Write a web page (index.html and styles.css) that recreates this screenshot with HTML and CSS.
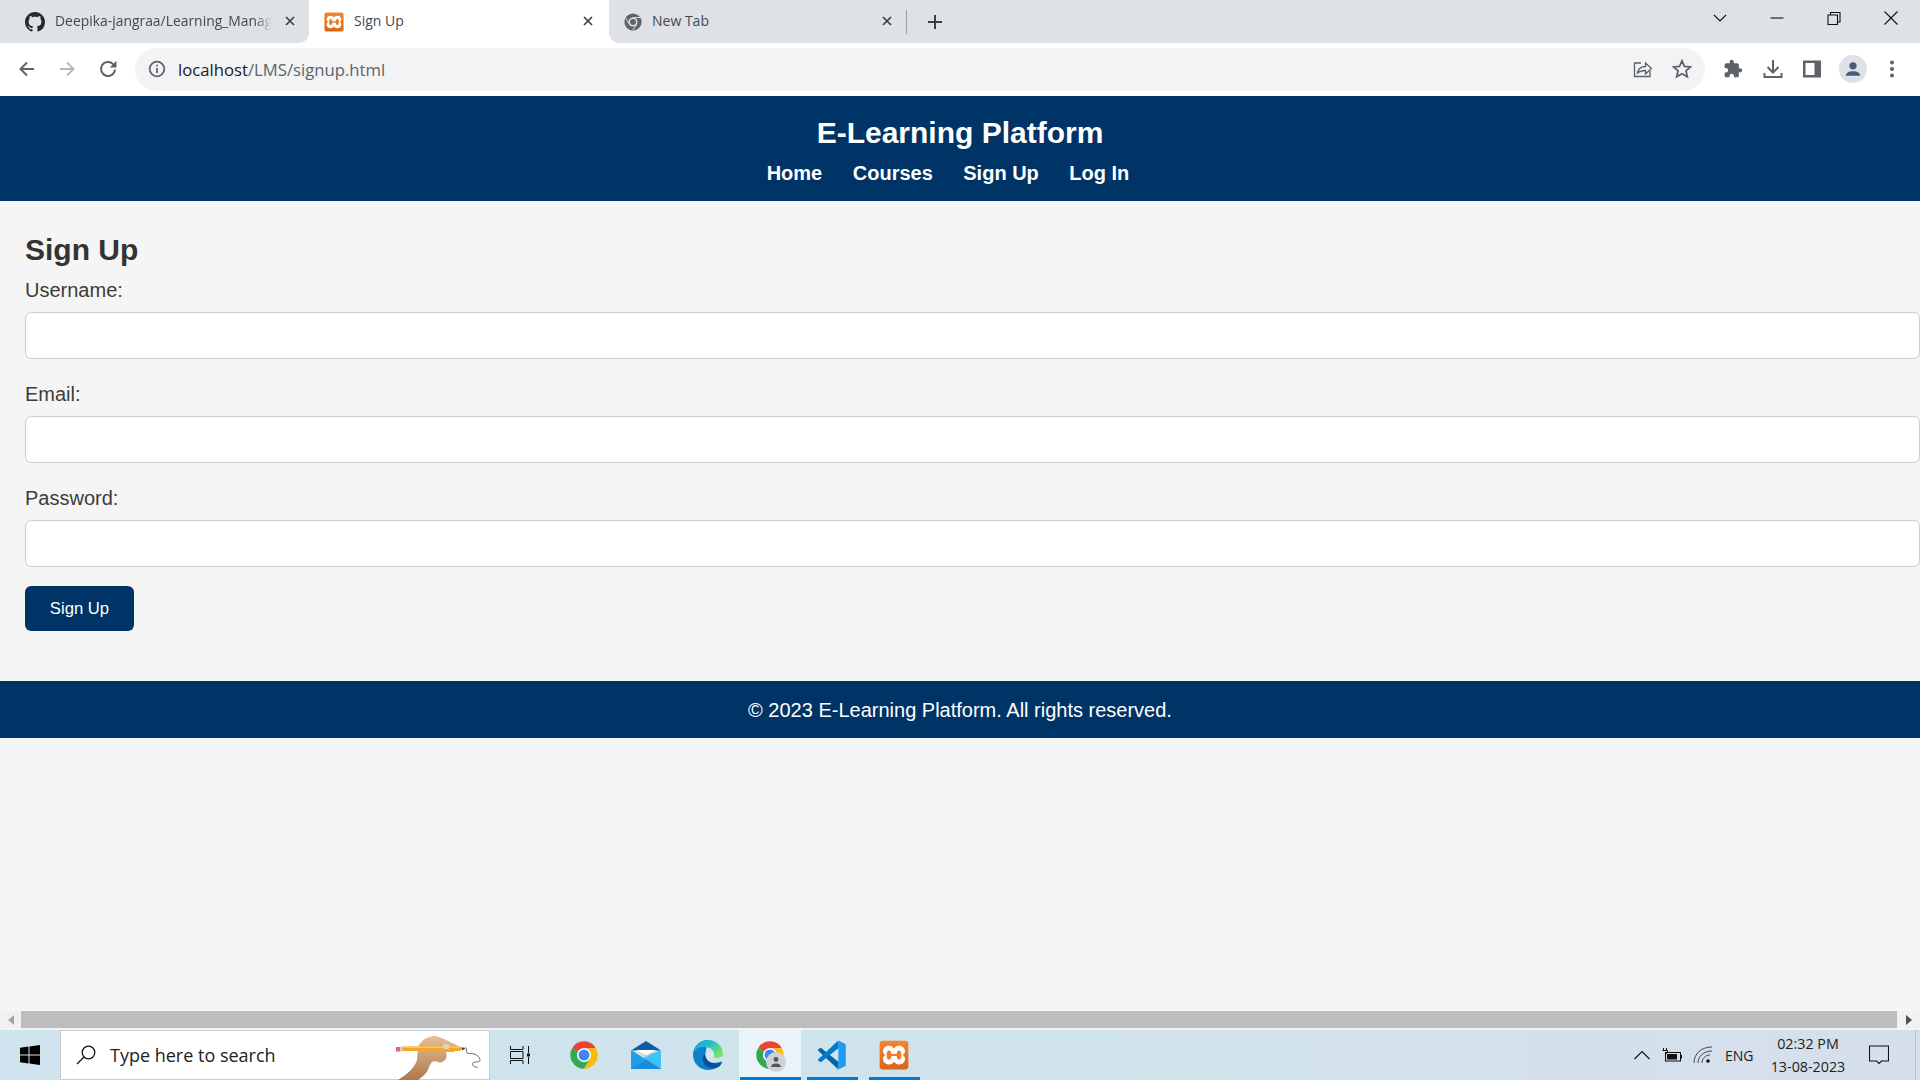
FILE: index.html
```html
<!DOCTYPE html>
<html lang="en">
<head>
<meta charset="utf-8">
<title>Sign Up</title>
<link rel="stylesheet" href="styles.css">
</head>
<body>
<svg class="defs" width="0" height="0" aria-hidden="true">
  <defs>
    <linearGradient id="xg" x1="0" y1="0" x2="0" y2="1"><stop offset="0" stop-color="#f4862f"/><stop offset="1" stop-color="#dc6416"/></linearGradient>
    <symbol id="chrome" viewBox="0 0 48 48">
      <path fill="#ea4335" d="M24 2a22 22 0 0 1 19.05 11H24a11 11 0 0 0-9.53 5.5L4.95 13A22 22 0 0 1 24 2z"/>
      <path fill="#fbbc05" d="M43.05 13A22 22 0 0 1 24 46l9.53-16.5A11 11 0 0 0 24 13z"/>
      <path fill="#34a853" d="M4.95 13A22 22 0 0 0 24 46l9.53-16.5A11 11 0 0 1 14.47 18.5z"/>
      <circle cx="24" cy="24" r="11" fill="#fff"/>
      <circle cx="24" cy="24" r="8.8" fill="#4285f4"/>
    </symbol>
    <symbol id="xampp" viewBox="0 0 24 24">
      <rect x="0.5" y="0.5" width="23" height="23" rx="2.5" fill="url(#xg)"/>
      <path fill="#fff" d="M8 4.500c2 0 3 1 4 2.200 1-1.200 2-2.200 4-2.200 3 0 4.800 2 4.800 4.500 0 1.500-.8 2.300-1.800 3 1 .7 1.800 1.500 1.800 3 0 2.500-1.800 4.500-4.800 4.500-2 0-3-1-4-2.200-1 1.200-2 2.200-4 2.200-3 0-4.800-2-4.800-4.500 0-1.500.8-2.300 1.800-3-1-.7-1.800-1.500-1.800-3 0-2.500 1.800-4.500 4.800-4.500z"/>
      <ellipse cx="8" cy="12" rx="1.900" ry="3.700" fill="#ee7a2c"/>
      <ellipse cx="16" cy="12" rx="1.900" ry="3.700" fill="#ee7a2c"/>
      <rect x="8" y="11.200" width="8" height="1.600" fill="#ee7a2c"/>
    </symbol>
  </defs>
</svg>

<div class="tabstrip">
  <div class="tab tab-first">
    <svg class="ico-18 gh" viewBox="0 0 16 16"><path fill="#24292f" d="M8 0C3.58 0 0 3.58 0 8c0 3.54 2.29 6.53 5.47 7.59.4.07.55-.17.55-.38 0-.19-.01-.82-.01-1.49-2.01.37-2.53-.49-2.69-.94-.09-.23-.48-.94-.82-1.13-.28-.15-.68-.52-.01-.53.63-.01 1.08.58 1.23.82.72 1.21 1.87.87 2.33.66.07-.52.28-.87.51-1.07-1.78-.2-3.64-.89-3.64-3.95 0-.87.31-1.59.82-2.15-.08-.2-.36-1.02.08-2.12 0 0 .67-.21 2.2.82.64-.18 1.32-.27 2-.27.68 0 1.36.09 2 .27 1.53-1.04 2.2-.82 2.2-.82.44 1.1.16 1.92.08 2.12.51.56.82 1.27.82 2.15 0 3.07-1.87 3.75-3.65 3.95.29.25.54.73.54 1.48 0 1.07-.01 1.93-.01 2.2 0 .21.15.46.55.38A8.013 8.013 0 0016 8c0-4.42-3.58-8-8-8z"/></svg>
    <span class="tab-title tab-title-fade">Deepika-jangraa/Learning_Manag</span>
    <svg class="tab-close" viewBox="0 0 12 12"><path d="M2 2l8 8M10 2l-8 8"/></svg>
  </div>
  <div class="tab tab-active">
    <svg class="ico-18 xam"><use href="#xampp"/></svg>
    <span class="tab-title">Sign Up</span>
    <svg class="tab-close" viewBox="0 0 12 12"><path d="M2 2l8 8M10 2l-8 8"/></svg>
  </div>
  <div class="tab tab-rest">
    <div class="tab-third">
      <svg class="ico-18" viewBox="0 0 48 48"><circle cx="24" cy="24" r="23" fill="#5f6368"/><circle cx="24" cy="24" r="12" fill="#dee1e6"/><circle cx="24" cy="24" r="8" fill="#5f6368"/><path stroke="#dee1e6" stroke-width="2.5" d="M24 12h20M14 30L4 12M34 30L23 47"/></svg>
      <span class="tab-title">New Tab</span>
      <svg class="tab-close" viewBox="0 0 12 12"><path d="M2 2l8 8M10 2l-8 8"/></svg>
    </div>
    <span class="tab-sep"></span>
    <svg class="new-tab" viewBox="0 0 16 16"><path d="M8 1v14M1 8h14"/></svg>
    <div class="win-controls">
      <svg class="win-ico" viewBox="0 0 16 16"><path d="M2 5l6 6 6-6"/></svg>
      <svg class="win-ico" viewBox="0 0 16 16"><path d="M1.500 8h13"/></svg>
      <svg class="win-ico" viewBox="0 0 16 16"><path d="M2 5h9.500v9.500H2zM4.500 5V2.500H14V12h-2.500"/></svg>
      <svg class="win-ico" viewBox="0 0 16 16"><path d="M1.500 1.500l13 13M14.500 1.500l-13 13"/></svg>
    </div>
  </div>
</div>

<div class="toolbar">
  <svg class="tb-ico back" viewBox="0 0 20 20"><path d="M17 10H4M10 3.500L3.500 10l6.500 6.500"/></svg>
  <svg class="tb-ico forward" viewBox="0 0 20 20"><path d="M3 10h13M10 3.500l6.500 6.500-6.500 6.500"/></svg>
  <svg class="tb-ico reload" viewBox="0 0 20 20"><path d="M17 10.500a7 7 0 1 1-2-5.400L17 7.500"/><path class="solid" d="M18.500 1.800v6.800h-6.800z"/></svg>
  <div class="omnibox">
    <svg class="info" viewBox="0 0 18 18"><circle cx="9" cy="9" r="7.300"/><path d="M9 8v5"/><circle class="solid" cx="9" cy="5.500" r="1"/></svg>
    <span class="url"><span class="url-host">localhost</span>/LMS/signup.html</span>
    <svg class="tb-ico share" viewBox="0 0 20 20"><path d="M8 4H1.500v13.500H17V12M4.500 14c.8-4 4-6.500 8-6.500V4l6 5.500-6 5.500v-3.500c-3 0-6 .8-8 2.500z"/></svg>
    <svg class="tb-ico star" viewBox="0 0 20 20"><path d="M10 1.800l2.500 5.500 6 .6-4.500 4 1.300 5.900L10 14.800l-5.300 3 1.300-5.900-4.500-4 6-.6z"/></svg>
  </div>
  <svg class="tb-ico solid-ico puzzle" viewBox="0 0 24 24"><path d="M20.500 11H19V7c0-1.100-.9-2-2-2h-4V3.500C13 2.120 11.880 1 10.500 1S8 2.120 8 3.500V5H4c-1.100 0-1.990.9-1.990 2v3.800H3.500c1.490 0 2.700 1.210 2.700 2.700s-1.210 2.700-2.700 2.700H2V20c0 1.100.9 2 2 2h3.800v-1.500c0-1.490 1.210-2.700 2.700-2.700 1.490 0 2.700 1.210 2.700 2.700V22H17c1.100 0 2-.9 2-2v-4h1.500c1.380 0 2.500-1.120 2.500-2.500S21.880 11 20.500 11z"/></svg>
  <svg class="tb-ico download" viewBox="0 0 20 20"><path d="M10 1v12M4.500 8l5.500 5.500L15.500 8M1.500 14v4h17v-4"/></svg>
  <svg class="tb-ico panel" viewBox="0 0 20 20"><path class="solid" fill-rule="evenodd" d="M1 1.500h18v17H1zM3.500 4v12h9V4z"/></svg>
  <div class="avatar"><svg viewBox="0 0 20 20"><circle cx="10" cy="6.500" r="4"/><path d="M2 17.500c0-3.500 4-5 8-5s8 1.500 8 5z"/></svg></div>
  <svg class="tb-ico dots" viewBox="0 0 20 20"><circle cx="10" cy="3.500" r="2"/><circle cx="10" cy="10" r="2"/><circle cx="10" cy="16.500" r="2"/></svg>
</div>

<div class="viewport">
  <header class="site-header">
    <h1 class="site-title">E-Learning Platform</h1>
    <nav class="site-nav">
      <a href="#">Home</a>
      <a href="#">Courses</a>
      <a href="#">Sign Up</a>
      <a href="#">Log In</a>
    </nav>
  </header>
  <main class="content">
    <h2 class="page-title">Sign Up</h2>
    <form>
      <label for="u">Username:</label>
      <input id="u" type="text">
      <label for="e">Email:</label>
      <input id="e" type="email">
      <label for="p">Password:</label>
      <input id="p" type="password">
      <button type="button">Sign Up</button>
    </form>
  </main>
  <footer class="site-footer">© 2023 E-Learning Platform. All rights reserved.</footer>
</div>

<div class="hscroll">
  <span class="arrow arrow-left"></span>
  <span class="thumb"></span>
  <span class="arrow arrow-right"></span>
</div>
<div class="scroll-gap"></div>

<div class="taskbar">
  <div class="start">
    <svg viewBox="0 0 20 20"><path d="M0 2.800l8.500-1.200v7.900H0zM9.500 1.400L20 0v9.500H9.500zM0 10.500h8.500v7.900L0 17.200zM9.500 10.500H20V20L9.500 18.600z"/></svg>
  </div>
  <div class="search">
    <svg class="search-ico" viewBox="0 0 20 20"><circle cx="12.500" cy="7.500" r="6.300"/><path d="M8 12L1 19"/></svg>
    <span>Type here to search</span>
    <svg class="hand" viewBox="0 0 90 50">
      <defs>
        <linearGradient id="skin" x1="0" y1="0" x2="0" y2="1"><stop offset="0" stop-color="#e4c09a"/><stop offset=".6" stop-color="#c4946a"/><stop offset="1" stop-color="#a97850"/></linearGradient>
      </defs>
      <path fill="url(#skin)" d="M2 50C10 45 18 39 21 30 22 24 21 19 23 15 26 10 31 7 37 6c5 0 9 2 13 4 4 2 9 4 12 6l-4 6-8 0c1 3 1 6-1 8-2 2-5 3-7 2-2-1-5-1-6 0-2 2-3 5-4 8-2 4-6 7-10 10z"/>
      <rect x="0" y="17" width="4.500" height="4.500" fill="#d9667a"/>
      <rect x="4.500" y="16.500" width="2" height="5" fill="#cfcfcf"/>
      <path fill="#f0a72a" d="M6.500 16.500H64l3 2-3 2.500H6.500z"/>
      <rect x="6.500" y="16.500" width="57" height="1.500" fill="#f8c65a"/>
      <path fill="#4a3b28" d="M66 17l3.500 1.700-3.500 1.500z"/>
      <ellipse cx="50" cy="16.500" rx="3.500" ry="2.800" fill="#ecd0b0"/>
      <path fill="none" stroke="#6f6f6f" stroke-width="1" d="M69 17c2 1 1 5 2 6s4 0 7 1 6 3 6 6-5 1-7 3 2 5 5 4"/>
    </svg>
  </div>
  <div class="slot slot-view">
    <svg class="taskview" viewBox="0 0 20 18"><path d="M.5 0v3.500h12.500V0M.5 18v-3.500h12.500V18M.5 5.500h12.500v7H.5zM18.500 0v7M18.500 11v7"/><rect class="dot" x="17" y="7.500" width="3" height="3"/></svg>
  </div>
  <div class="slot"><svg class="app"><use href="#chrome"/></svg></div>
  <div class="slot">
    <svg class="app" viewBox="0 0 30 30">
      <path fill="#0c5ca8" d="M0 10.500L15 1l15 9.500z"/>
      <path fill="#1f9fe8" d="M0 10L15 19.500 30 10V29H0z"/>
      <path fill="#3cc4f6" d="M30 10L15 19.500l-3-2z"/>
      <path fill="#3cc4f6" d="M30 10v19L15 19.500z"/>
      <path fill="#1b8cdb" d="M0 29L15 19.500 30 29z"/>
      <path fill="#fff" d="M5 10h20L15 17.300z"/>
      <path fill="#b9c2cc" d="M5 10l10 5.500L25 10l-10 7.300z"/>
    </svg>
  </div>
  <div class="slot">
    <svg class="app" viewBox="0 0 30 30">
      <defs>
        <linearGradient id="eg" x1="0" y1="0" x2="1" y2="0.600"><stop offset="0" stop-color="#1b9de2"/><stop offset=".55" stop-color="#22c2c4"/><stop offset="1" stop-color="#7be36b"/></linearGradient>
      </defs>
      <path fill="#0f7fd0" d="M15 0C6.700 0 0 6.700 0 15s6.700 15 15 15c6 0 12-3 14-8.500-8 3-16 1-17-6z"/>
      <path fill="url(#eg)" d="M15 0C7 0 1 6 0 13c3-5 8-7 13-6 6 1 9 4 8 9-.3 2 3 2.500 6 1.500 2-1 3-2 3-3.500C30 6 23 0 15 0z"/>
      <path fill="#0b4f96" d="M12 14c-2.500 2-3 5-1.500 8.500 2 5 9 7.500 15 4.500 2-1 3-3 3.500-5.500-2 1.500-6 2.500-10 1.500-4-1-6-4-7-9z"/>
      <path fill="#d5e9f2" d="M17 12c-3 .5-4.500 3-3.500 5.500 1 2.500 4 4 7.500 4-2.500-1-4-3-3.500-4.500.3-1 2-1.500 3.500-.5 0-2.500-1.500-4.500-4-4.500z"/>
    </svg>
  </div>
  <div class="slot slot-open slot-active">
    <svg class="app app-shift"><use href="#chrome"/></svg>
    <div class="profile-badge"><svg viewBox="0 0 20 20"><circle cx="10" cy="6.500" r="3.500"/><path d="M3 17c0-3.500 3.500-5 7-5s7 1.500 7 5z"/></svg></div>
  </div>
  <div class="slot slot-open">
    <svg class="app" viewBox="0 0 100 100">
      <path fill="#0065a9" d="M4 36v-5l9-5 59 47-1 25z"/>
      <path fill="#007acc" d="M71 2l1 25-59 47-9-5v-5z"/>
      <path fill="#1f9cf0" d="M71 2l25 12v72L71 98z"/>
    </svg>
  </div>
  <div class="slot slot-open"><svg class="app"><use href="#xampp"/></svg></div>
  <div class="tray">
    <svg class="tray-chev" viewBox="0 0 16 10"><path d="M.5 9L8 1.500 15.500 9"/></svg>
    <svg class="battery" viewBox="0 0 20 14"><path class="bline" d="M1.500 0v2.500M4.500 0v2.500M.5 2.500h5v2L3 6.500"/><rect class="bline" x="3.500" y="4.500" width="15" height="8.500"/><rect x="5" y="6" width="10" height="5.500" fill="#111"/><rect x="19" y="7" width="1" height="3.500" fill="#111"/></svg>
    <svg class="wifi" viewBox="0 0 20 18"><path d="M1 17C1 8 8 1 19 1M5 17c0-6 5-12 14-12M9 17c0-4 3-8 8-8"/><circle class="dot" cx="15" cy="15" r="1.800"/></svg>
    <span class="lang">ENG</span>
    <div class="clock"><span>02:32 PM</span><span>13-08-2023</span></div>
    <svg class="notif" viewBox="0 0 20 20"><path d="M.5 1h19v15h-7l-2.500 2.500L7.500 16h-7z"/></svg>
    <span class="show-desktop"></span>
  </div>
</div>
</body>
</html>
```

FILE: styles.css
```css
* { box-sizing: border-box; }
html, body { margin: 0; padding: 0; }
body {
  width: 1920px;
  height: 1080px;
  overflow: hidden;
  display: flex;
  flex-direction: column;
  font-family: "Liberation Sans", Arial, sans-serif;
  background: #fff;
  color: #333;
}
.defs { position: absolute; }

/* browser tabs */
.tabstrip { height: 43px; display: flex; background: #fff; flex: none; }
.tab { display: flex; align-items: center; height: 43px; font-family: "Open Sans", sans-serif; font-size: 14px; color: #45494e; }
.tab-first { width: 309px; background: #dee1e6; border-bottom-right-radius: 10px; padding-left: 25px; }
.tab-active { width: 300px; background: #fff; border-radius: 12px 12px 0 0; padding-left: 15px; }
.tab-rest { flex: 1; background: #dee1e6; border-bottom-left-radius: 10px; padding-left: 15px; }
.tab-third { display: flex; align-items: center; width: 282px; }
.ico-18 { width: 18px; height: 20px; flex: none; }
.gh { width: 20px; height: 20px; }
.xam { width: 20px; height: 20px; }
.tab-title { margin-left: 10px; margin-bottom: 2px; white-space: nowrap; }
.tab-title-fade { font-size: 13.900px; -webkit-mask-image: linear-gradient(90deg, #000 92%, transparent); mask-image: linear-gradient(90deg, #000 92%, transparent); }
.tab-close { width: 12px; height: 12px; margin-left: auto; margin-right: 15px; margin-bottom: 1px; fill: none; stroke: #3c4043; stroke-width: 1.700; }
.tab-first .tab-close { margin-right: 13px; }
.tab-third .tab-close { margin-right: 13px; }
.tab-sep { width: 1px; height: 24px; background: #9aa0a6; margin-left: 0; }
.new-tab { width: 16px; height: 16px; margin-left: 20px; fill: none; stroke: #3c4043; stroke-width: 2; }
.win-controls { margin-left: auto; display: flex; align-items: center; gap: 41px; padding-right: 21px; height: 36px; align-self: flex-start; }
.win-ico { width: 16px; height: 16px; fill: none; stroke: #111; stroke-width: 1.100; }

/* toolbar */
.toolbar { height: 53px; flex: none; display: flex; align-items: center; padding-left: 17px; background: #fff; padding-bottom: 1px; }
.tb-ico { width: 20px; height: 20px; flex: none; fill: none; stroke: #5f6368; stroke-width: 2; }
.tb-ico .solid, .info .solid { fill: #5f6368; stroke: none; }
.forward { margin-left: 20px; stroke: #b4b7bb; }
.reload { margin-left: 21px; }
.omnibox { width: 1570px; height: 43px; margin-left: 17px; border-radius: 22px; background: #f1f3f4; display: flex; align-items: center; padding: 0 13px; }
.info { width: 18px; height: 18px; fill: none; stroke: #5f6368; stroke-width: 1.800; flex: none; }
.url { margin-left: 12px; margin-top: 1px; font-family: "Open Sans", sans-serif; font-size: 16.700px; color: #5f6368; }
.url-host { color: #202124; }
.share { margin-left: auto; stroke-width: 1.300; }
.star { margin-left: 19px; stroke-width: 1.800; }
.puzzle { margin-left: 18px; fill: #5f6368; stroke: none; }
.download { margin-left: 20px; stroke-width: 2; }
.panel { margin-left: 19px; }
.avatar { width: 28px; height: 28px; margin-left: 17px; border-radius: 50%; background: #dee1e6; display: flex; align-items: center; justify-content: center; }
.avatar svg { width: 18px; height: 18px; fill: #4a5a78; }
.dots { margin-left: 15px; fill: #5f6368; stroke: none; }

/* page */
.viewport { flex: 1; background: #f5f5f5; overflow: hidden; }
.site-header { background: #003366; color: #fff; text-align: center; height: 105px; padding-top: 19px; }
.site-title { margin: 0; font-size: 30px; line-height: 35px; font-weight: 700; }
.site-nav { display: flex; justify-content: center; gap: 30.500px; margin-top: 12px; padding-right: 24px; }
.site-nav a { color: #fff; font-size: 20px; line-height: 23px; font-weight: 700; text-decoration: none; }
.content { height: 480px; padding: 31px 0 0 25px; }
.page-title { margin: 0 0 12px; font-size: 30px; line-height: 35px; font-weight: 700; color: #333; }
label { display: block; font-size: 20px; line-height: 23px; margin-bottom: 10px; color: #3c3c3c; }
input { display: block; width: 100%; height: 46.500px; margin: 0 0 24.500px; border: 1.250px solid #ccc; border-radius: 6.250px; background: #fff; padding: 0 10px; }
input#p { margin-bottom: 19.500px; }
button { display: block; width: 109px; height: 45px; border: 0; border-radius: 6.250px; background: #003366; color: #fff; font-family: "Liberation Sans", Arial, sans-serif; font-size: 16.670px; padding: 0; }
.site-footer { height: 57px; background: #003366; color: #fff; font-size: 20px; line-height: 59px; text-align: center; }

/* scrollbar */
.hscroll { height: 17px; flex: none; display: flex; background: #f1f1f1; align-items: center; }
.arrow { width: 21px; height: 17px; display: flex; align-items: center; justify-content: center; }
.arrow::before { content: ""; border-style: solid; border-width: 5px 0 5px 6px; border-color: transparent transparent transparent #505050; }
.arrow-left::before { border-width: 5px 6px 5px 0; border-color: transparent #a3a3a3 transparent transparent; }
.thumb { flex: 1; height: 17px; background: #bdbdbd; }
.arrow-right { width: 23px; }
.scroll-gap { height: 2px; flex: none; background: #f1f5f7; }

/* taskbar */
.taskbar { height: 50px; flex: none; display: flex; background: linear-gradient(90deg, #cfe4ee, #d0e3ec 50%, #d5dfeb); }
.start { width: 60px; display: flex; align-items: center; justify-content: center; }
.start svg { width: 20px; height: 20px; fill: #000; }
.search { width: 430px; margin-right: 1px; background: #fff; border: 1px solid #c8cdd0; display: flex; align-items: center; padding-left: 15px; position: relative; font-family: "Open Sans", sans-serif; font-size: 18px; color: #222; }
.search span { margin-left: 14px; }
.search-ico { width: 20px; height: 20px; fill: none; stroke: #111; stroke-width: 1.300; flex: none; }
.hand { position: absolute; left: 335px; top: -1px; width: 90px; height: 50px; }
.slot { width: 62px; display: flex; align-items: center; justify-content: center; position: relative; flex: none; }
.slot-view { padding-right: 4px; }
.taskview { width: 20px; height: 18px; fill: none; stroke: #111; stroke-width: 1; }
.taskview .dot { fill: #111; stroke: none; }
.app { width: 30px; height: 30px; }
.slot-open::after { content: ""; position: absolute; left: 6px; right: 5px; bottom: 0; height: 3px; background: #0078d4; }
.slot-active { background: #eaf4f8; }
.slot-active::after { left: 1px; right: 0; }
.profile-badge { position: absolute; left: 27px; top: 22px; width: 20px; height: 20px; border-radius: 50%; background: #d0d3d6; display: flex; align-items: center; justify-content: center; }
.profile-badge svg { width: 14px; height: 14px; fill: #555; }
.tray { margin-left: auto; display: flex; align-items: center; font-family: "Open Sans", sans-serif; color: #222; }
.tray-chev { width: 16px; height: 10px; fill: none; stroke: #111; stroke-width: 1.100; }
.battery { width: 20px; height: 14px; margin-left: 12px; }
.bline { fill: none; stroke: #111; stroke-width: 1; }
.wifi { width: 20px; height: 18px; margin-left: 11px; fill: none; stroke: #444; stroke-width: 1; }
.wifi .dot { fill: #111; stroke: none; }
.lang { margin-left: 12px; width: 43px; font-size: 14px; }
.clock { width: 80px; display: flex; flex-direction: column; align-items: center; gap: 3px; font-size: 14.300px; line-height: 20px; }
.notif { width: 20px; height: 20px; margin-left: 21px; fill: none; stroke: #111; stroke-width: 1.100; }
.show-desktop { width: 1px; height: 50px; background: #b6c2cc; margin: 0 4px 0 26px; }
```
